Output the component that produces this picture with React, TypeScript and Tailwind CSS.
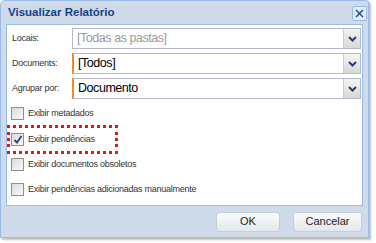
const font = { fontFamily: '"Liberation Sans", Arial, sans-serif' };

function Chevron() {
  return (
    <svg width="9" height="6" viewBox="0 0 9 6">
      <path d="M1 1 L4.5 4.5 L8 1" fill="none" stroke="#1e3f7a" strokeWidth="2" />
    </svg>
  );
}

function Select({ value, placeholder, accent }: { value: string; placeholder?: boolean; accent?: boolean }) {
  return (
    <div
      className={`flex h-[21px] flex-1 items-stretch border border-[#b5b8c8] bg-white ${accent ? "border-l-2 border-l-[#f08a2c]" : ""}`}
    >
      <div
        className={`flex flex-1 items-center whitespace-nowrap pl-[4px] text-[12.5px] leading-none tracking-[-0.45px] ${placeholder ? "text-[#9a9a9a]" : "text-black"}`}
      >
        {value}
      </div>
      <div className="flex w-[17px] items-center justify-center border-l border-[#c9ccd6] bg-gradient-to-b from-[#f4f4f4] to-[#d8d8d8]">
        <Chevron />
      </div>
    </div>
  );
}

function Row({ label, children }: { label: string; children: React.ReactNode }) {
  return (
    <div className="flex items-center">
      <div className="w-[65px] shrink-0 whitespace-nowrap pl-[5px] text-[9px] tracking-[-0.25px] text-[#333]">{label}</div>
      {children}
    </div>
  );
}

function Check({ label, checked }: { label: string; checked?: boolean }) {
  return (
    <div className="flex h-[13px] items-center gap-[4px]">
      <div className="flex h-[13px] w-[13px] shrink-0 items-center justify-center border border-[#8f8f8f] bg-gradient-to-br from-[#dcdcdc] to-[#fafafa]">
        {checked && (
          <svg width="10" height="9" viewBox="0 0 10 9">
            <path d="M1.5 5 L4 7.5 L8.5 1" fill="none" stroke="#2a3f8a" strokeWidth="1.8" />
          </svg>
        )}
      </div>
      <span className="whitespace-nowrap text-[9px] tracking-[-0.25px] text-[#333]">{label}</span>
    </div>
  );
}

export default function App() {
  return (
    <div className="h-[243px] w-[376px] bg-white" style={font}>
      <div className="flex h-[238px] w-[369px] flex-col rounded-tl-[5px] rounded-tr-[3px] border border-[#99bbe8] bg-[#cfdbe8] shadow-[2px_2px_2px_rgba(0,0,0,0.25)]">
        <div className="flex h-[23px] shrink-0 items-center justify-between pl-[7px] pr-[1px] pt-[1px]">
          <span className="text-[11.5px] font-bold text-[#15428b]">Visualizar Relatório</span>
          <div className="flex h-[15px] w-[15px] items-center justify-center rounded-[2px] border border-[#99bbe8] bg-[#e4ecf7]">
            <svg width="9" height="9" viewBox="0 0 9 9">
              <path d="M1 1 L8 8 M8 1 L1 8" stroke="#15428b" strokeWidth="1.4" />
            </svg>
          </div>
        </div>
        <div className="mx-[5px] flex h-[182px] shrink-0 flex-col border border-[#99bbe8] bg-white">
          <div className="flex flex-col gap-[4px] pr-[1px] pt-[3px]">
            <Row label="Locais:">
              <Select value="[Todas as pastas]" placeholder />
            </Row>
            <Row label="Documents:">
              <Select value="[Todos]" accent />
            </Row>
            <Row label="Agrupar por:">
              <Select value="Documento" accent />
            </Row>
          </div>
          <div className="mt-[8px] flex flex-col pl-[4px]">
            <Check label="Exibir metadados" />
            <div className="-ml-[4px] mt-[5px] w-[111px] border-[3px] border-dotted border-[#e4141a] py-[5px] pl-[1px]">
              <Check label="Exibir pendências" checked />
            </div>
            <div className="mt-[4px]">
              <Check label="Exibir documentos obsoletos" />
            </div>
            <div className="mt-[12px]">
              <Check label="Exibir pendências adicionadas manualmente" />
            </div>
          </div>
        </div>
        <div className="flex flex-1 items-center justify-end gap-[13px] pr-[6px]">
          <button className="h-[20px] w-[64px] rounded-[3px] border border-[#c4cfdc] bg-gradient-to-b from-[#fbfbfb] to-[#e3e7ec] text-[11px] text-[#222]">
            OK
          </button>
          <button className="h-[20px] w-[69px] rounded-[3px] border border-[#c4cfdc] bg-gradient-to-b from-[#fbfbfb] to-[#e3e7ec] text-[11px] text-[#222]">
            Cancelar
          </button>
        </div>
      </div>
    </div>
  );
}
